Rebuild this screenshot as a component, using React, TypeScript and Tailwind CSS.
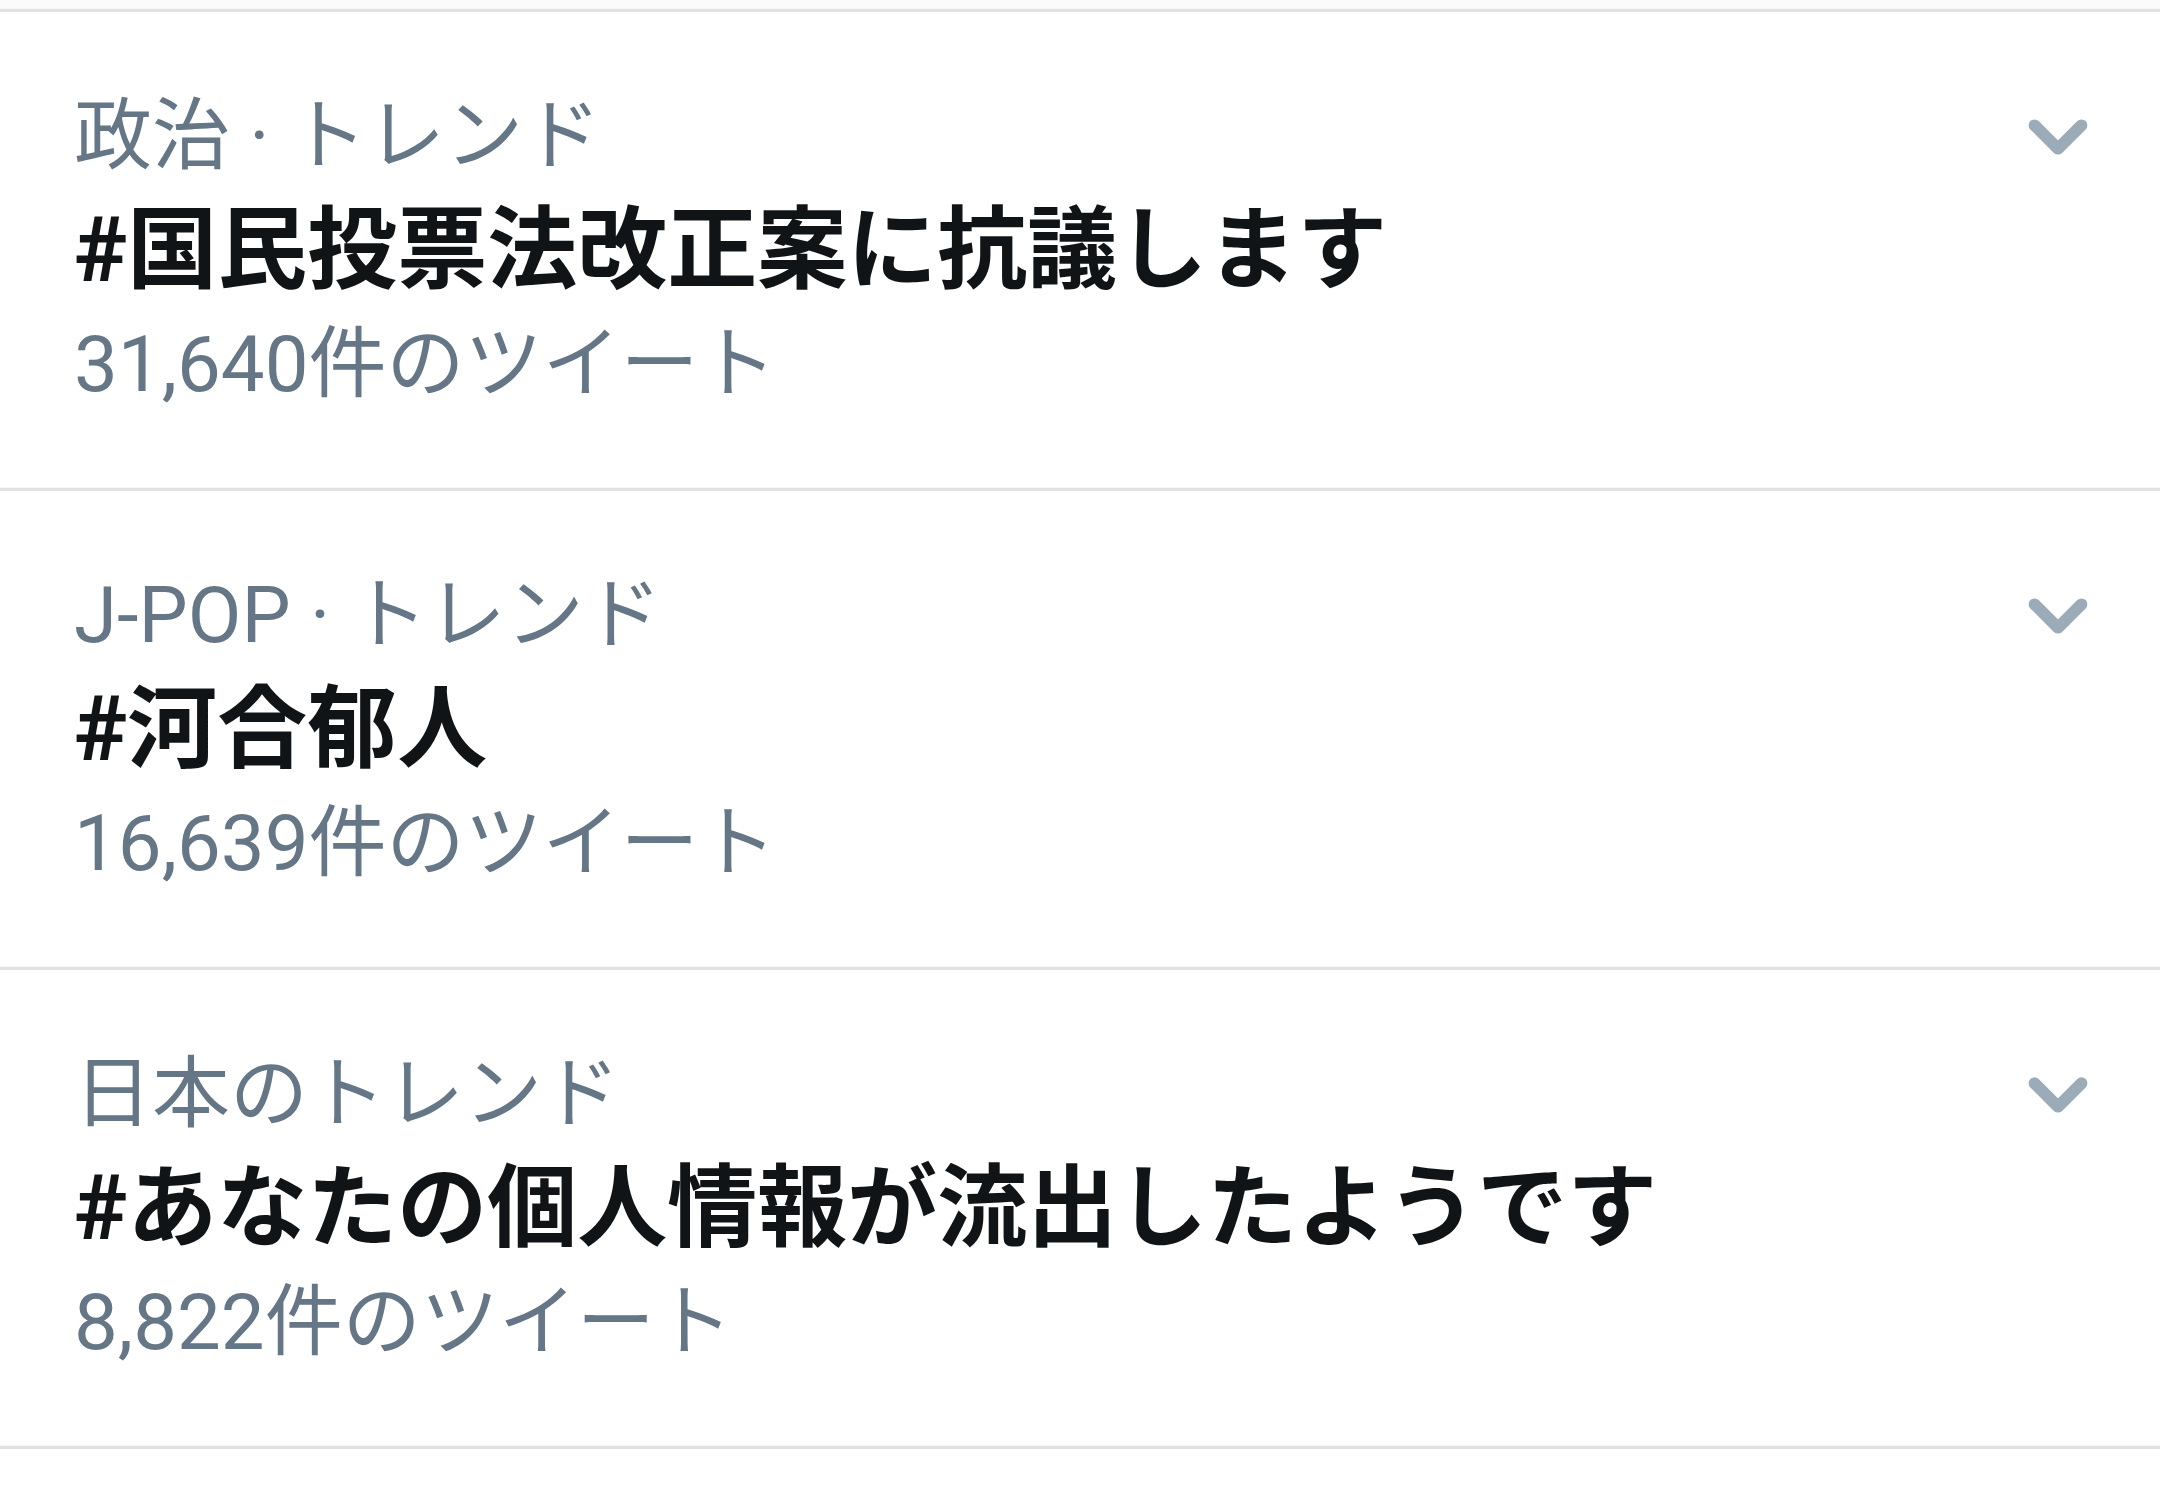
import { ChevronDown } from "lucide-react";

interface Trend {
  category: string;
  tag: string;
  count: string;
}

const trends: Trend[] = [
  { category: "政治 · トレンド", tag: "#国民投票法改正案に抗議します", count: "31,640件のツイート" },
  { category: "J-POP · トレンド", tag: "#河合郁人", count: "16,639件のツイート" },
  { category: "日本のトレンド", tag: "#あなたの個人情報が流出したようです", count: "8,822件のツイート" },
];

function Divider() {
  return (
    <div className="flex flex-col">
      <div className="h-[1px] bg-[#f6f6f6]" />
      <div className="h-[3px] bg-[#e1e1e1]" />
    </div>
  );
}

function TrendRow({ trend }: { trend: Trend }) {
  return (
    <div className="flex items-start justify-between pl-[74px] pr-[55px] pt-[68px] pb-[65px]">
      <div className="flex flex-col">
        <div className="text-[78px] leading-[114px] text-[#657786]">{trend.category}</div>
        <div className="text-[90px] leading-[114px] font-bold text-[#111417]">{trend.tag}</div>
        <div className="text-[78px] leading-[114px] text-[#657786]">{trend.count}</div>
      </div>
      <div className="flex h-[114px] items-center">
        <ChevronDown className="h-[94px] w-[94px] text-[#9babb8]" strokeWidth={3} />
      </div>
    </div>
  );
}

export default function App() {
  return (
    <div
      className="min-h-screen w-[2160px] bg-white"
      style={{ fontFamily: 'Roboto, "Noto Sans CJK JP", sans-serif' }}
    >
      <div className="h-[8px] bg-[#fbfbfb]" />
      <Divider />
      {trends.map((t) => (
        <div key={t.tag}>
          <TrendRow trend={t} />
          <Divider />
        </div>
      ))}
    </div>
  );
}
